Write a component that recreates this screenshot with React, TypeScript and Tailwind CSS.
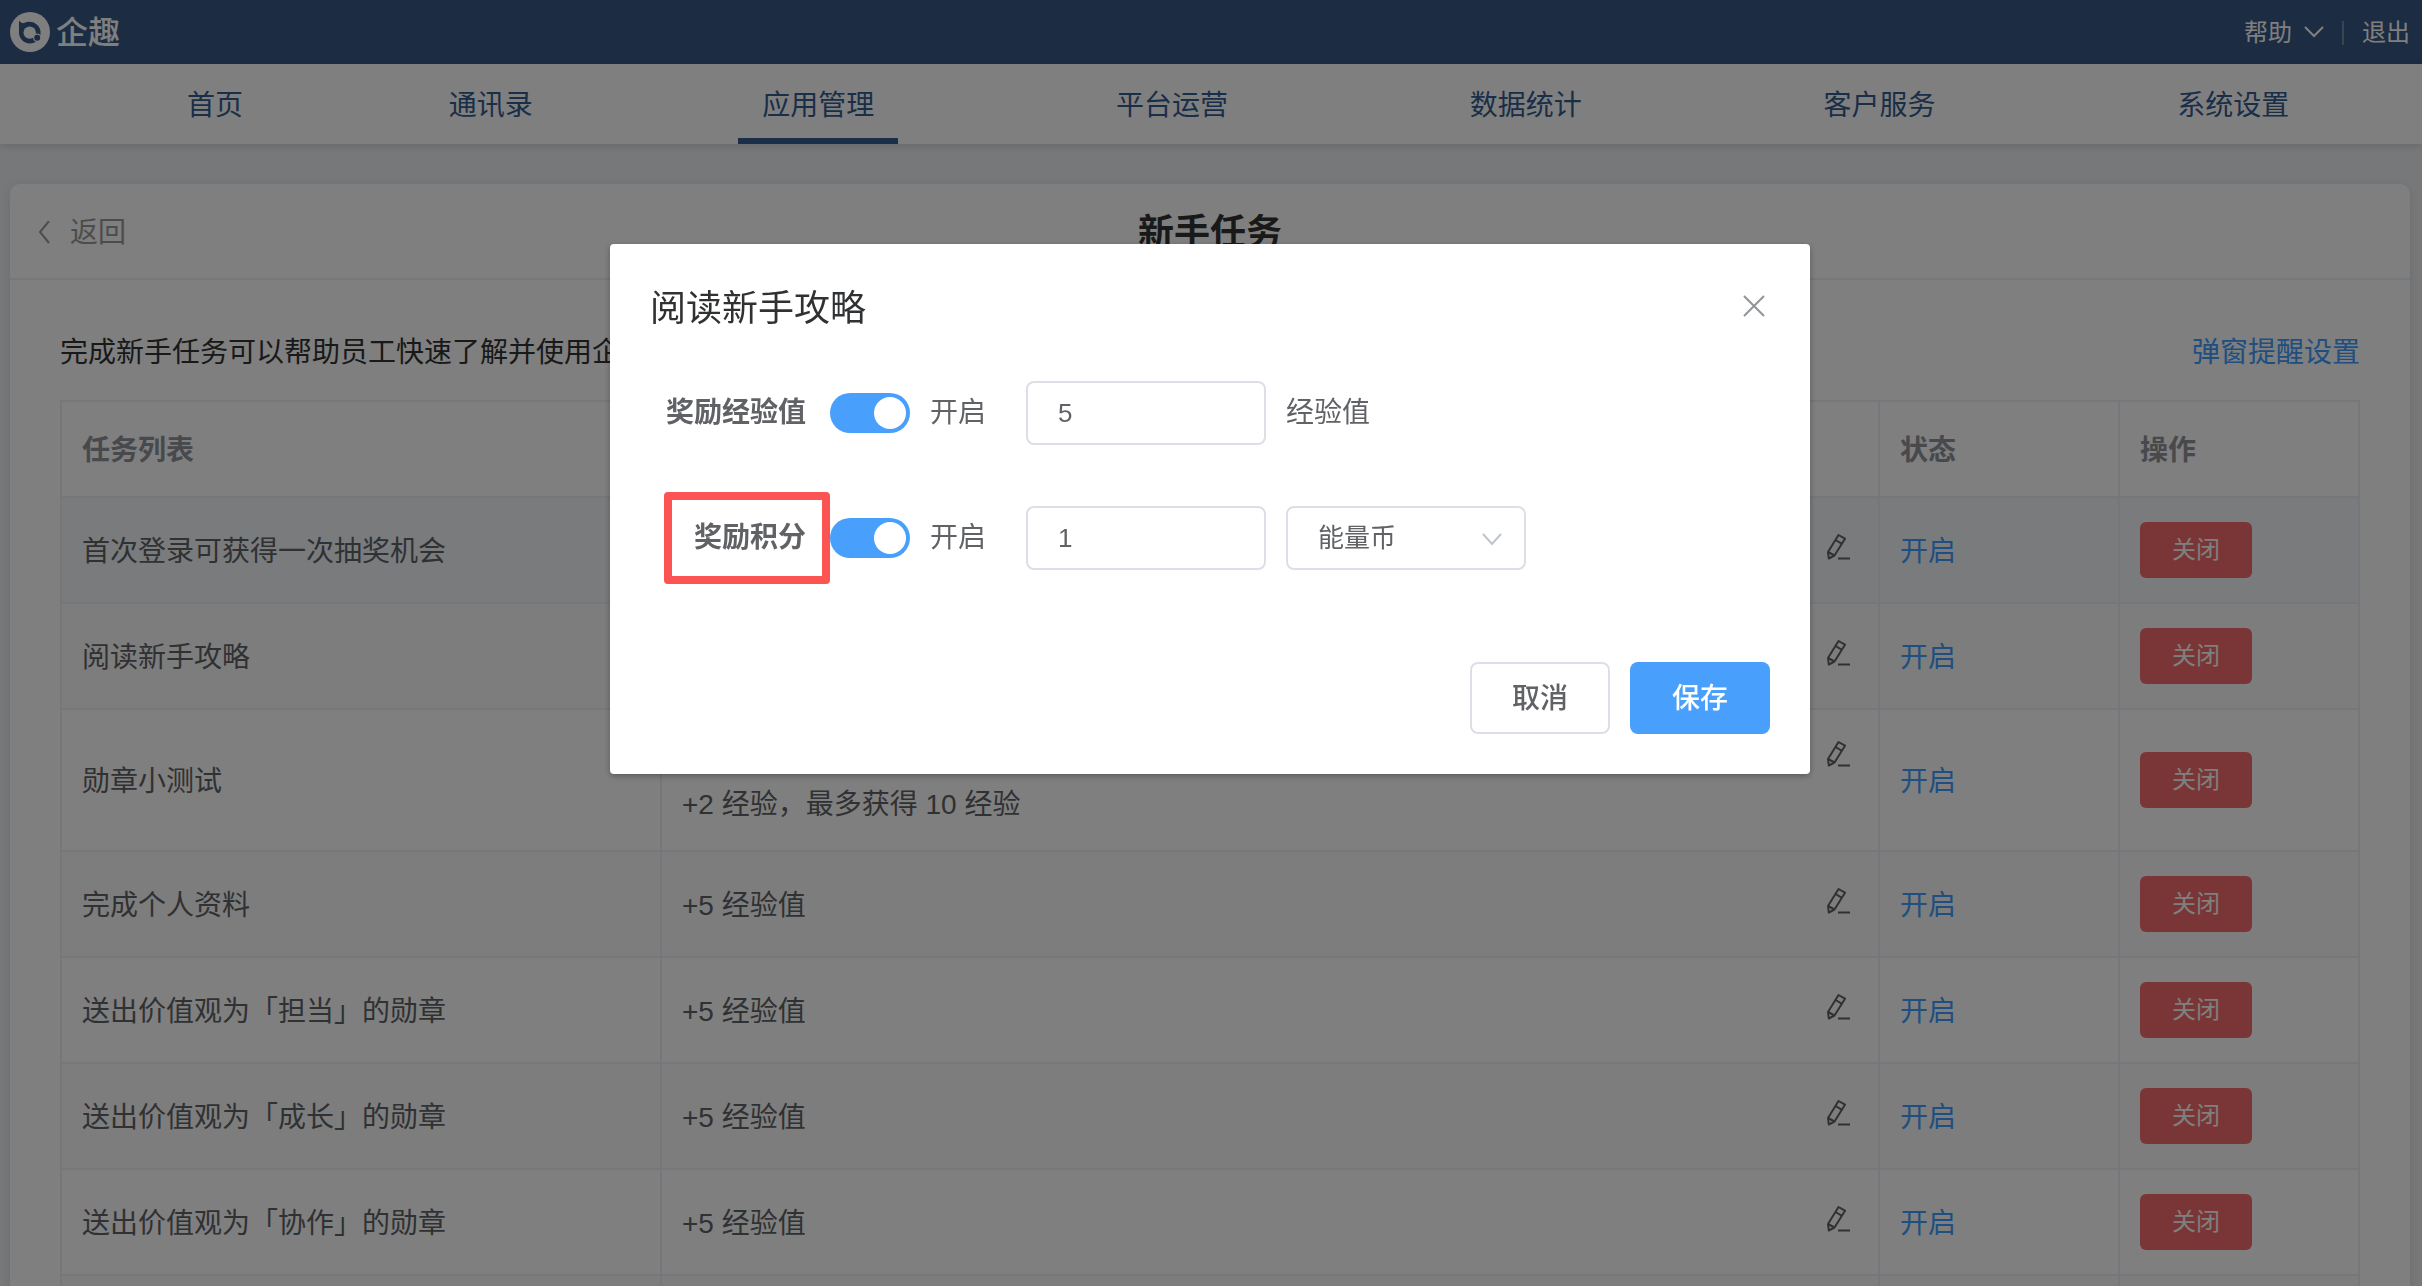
"use client";

import { useState } from 'react';

const navItems = ['首页', '通讯录', '应用管理', '平台运营', '数据统计', '客户服务', '系统设置'];

const tasks = [
  { name: '首次登录可获得一次抽奖机会', rewards: ['+1 次抽奖机会'] },
  { name: '阅读新手攻略', rewards: ['+5 经验值'] },
  { name: '勋章小测试', rewards: ['每答对一题', '+2 经验，最多获得 10 经验'] },
  { name: '完成个人资料', rewards: ['+5 经验值'] },
  { name: '送出价值观为「担当」的勋章', rewards: ['+5 经验值'] },
  { name: '送出价值观为「成长」的勋章', rewards: ['+5 经验值'] },
  { name: '送出价值观为「协作」的勋章', rewards: ['+5 经验值'] },
  { name: '送出价值观为「创新」的勋章', rewards: ['+5 经验值'] },
];

export default function App() {
  const [open, setOpen] = useState(true);

  return (
    <div className="h-screen overflow-hidden bg-[#eff1f4] font-['Liberation_Sans','Noto_Sans_CJK_SC',sans-serif] text-[28px] leading-[46px] text-[#606266]">
      <Header />
      <NavBar active="应用管理" />

      <main className="mt-10 mr-3 ml-[10px] rounded-[10px] bg-white shadow-[0_2px_12px_rgba(0,0,0,0.1)]">
        <div className="grid h-24 grid-cols-3 items-center border-b-2 border-[#ebeef5] px-6 pt-1">
          <a href="#" className="flex items-center gap-4 text-[#999999]">
            <svg className="h-6 w-5" viewBox="0 0 20 24" fill="none" stroke="currentColor" strokeWidth="2">
              <path d="M15 0L6 11l9 11" />
            </svg>
            返回
          </a>
          <h1 className="text-center text-[36px] font-bold text-[#333333]">新手任务</h1>
        </div>

        <div className="px-[50px] pt-[50px]">
          <div className="flex items-center justify-between pb-6">
            <p className="text-[#333333]">完成新手任务可以帮助员工快速了解并使用企趣</p>
            <a href="#" className="text-[#409eff]">弹窗提醒设置</a>
          </div>
          <TaskTable onEdit={() => setOpen(true)} />
        </div>
      </main>

      {open && <RewardDialog onClose={() => setOpen(false)} />}
    </div>
  );
}

function Header() {
  return (
    <header className="flex h-16 items-center justify-between bg-[#385884] pr-3 pl-[10px] text-white">
      <div className="flex items-center gap-[6px]">
        <Logo />
        <span className="pt-[2px] text-[32px] font-medium">企趣</span>
      </div>
      <div className="flex items-center gap-[18px] pt-[2px] text-[24px]">
        <button className="flex items-center gap-3">
          帮助
          <svg className="h-6 w-5" viewBox="0 0 20 24" fill="none" stroke="currentColor" strokeWidth="2">
            <path d="M1 6l9 9 9-9" />
          </svg>
        </button>
        <span className="h-6 w-[2px] bg-white/30" />
        <button>退出</button>
      </div>
    </header>
  );
}

function Logo() {
  return (
    <svg className="size-10" viewBox="0 0 40 40">
      <circle cx="20" cy="20" r="20" fill="#fff" />
      <path
        d="M9 8.500c1.500 2 3 2.800 5 2.600 1.800-.9 3.600-1.300 5.700-1.300A10.800 10.800 0 1 1 9 20.600z"
        fill="#385884"
      />
      <circle cx="19.700" cy="20.600" r="6.200" fill="#fff" />
      <circle cx="27.200" cy="25.800" r="4.200" fill="#fff" />
      <circle cx="27.200" cy="25.800" r="3" fill="#385884" />
    </svg>
  );
}

function NavBar({ active }: { active: string }) {
  return (
    <nav className="relative grid h-20 grid-cols-[250fr_302fr_354fr_354fr_354fr_354fr_354fr] bg-white pr-3 pl-[90px] shadow-[0_2px_8px_rgba(0,0,0,0.15)]">
      {navItems.map((item) => (
        <a
          key={item}
          href="#"
          className={`flex items-center justify-self-center border-b-6 px-6 pt-[10px] text-[#355c90] ${
            item === active ? 'border-[#355c90]' : 'border-transparent'
          }`}
        >
          {item}
        </a>
      ))}
    </nav>
  );
}

function TaskTable({ onEdit }: { onEdit: () => void }) {
  return (
    <table className="w-full table-fixed border-separate border-spacing-0 border-t-2 border-l-2 border-[#ebeef5] text-left">
      <colgroup>
        <col className="w-[600px]" />
        <col />
        <col className="w-[240px]" />
        <col className="w-[240px]" />
      </colgroup>
      <thead>
        <tr className="text-[#909399]">
          {['任务列表', '任务奖励', '状态', '操作'].map((title) => (
            <th key={title} className="border-r-2 border-b-2 border-[#ebeef5] px-5 pt-[26px] pb-[22px] font-bold">
              {title}
            </th>
          ))}
        </tr>
      </thead>
      <tbody>
        {tasks.map((task) => (
          <tr key={task.name} className="even:bg-[#fafafa] first:bg-[#f5f7fa]">
            <td className="border-r-2 border-b-2 border-[#ebeef5] px-5 pt-[26px] pb-[22px]">{task.name}</td>
            <td className="border-r-2 border-b-2 border-[#ebeef5] px-5 pt-[26px] pb-[22px]">
              <div className="flex items-start justify-between">
                <div>
                  {task.rewards.map((line) => (
                    <p key={line}>{line}</p>
                  ))}
                </div>
                <button aria-label="编辑" onClick={onEdit} className="flex h-9 items-center">
                  <EditIcon />
                </button>
              </div>
            </td>
            <td className="border-r-2 border-b-2 border-[#ebeef5] px-5 pt-[26px] pb-[22px] text-[#409eff]">开启</td>
            <td className="border-r-2 border-b-2 border-[#ebeef5] px-5 py-6">
              <button className="block h-14 w-28 rounded-[6px] bg-[#f56c6c] text-[24px] text-white">关闭</button>
            </td>
          </tr>
        ))}
      </tbody>
    </table>
  );
}

function EditIcon() {
  return (
    <svg className="size-8" viewBox="0 0 32 32" fill="none" stroke="currentColor" strokeWidth="2" strokeLinejoin="round">
      <path d="M12.500 4l6.500 3.700L8.500 24.500 2.800 27.500 2 21z" />
      <path d="M9.500 9l6.500 3.800M2 21l6.500 3.500M12 27.500h12" />
    </svg>
  );
}

function RewardDialog({ onClose }: { onClose: () => void }) {
  return (
    <div className="fixed inset-0 z-10 bg-black/50 pt-[244px] pr-[2px]">
      <div
        role="dialog"
        aria-label="阅读新手攻略"
        className="mx-auto w-[1200px] rounded-[4px] bg-white p-10 shadow-[0_2px_6px_rgba(0,0,0,0.3)]"
      >
        <div className="flex items-start justify-between">
          <h2 className="text-[36px] leading-[50px] text-[#303133]">阅读新手攻略</h2>
          <button aria-label="关闭" onClick={onClose} className="pt-[6px] text-[#909399]">
            <svg className="size-8" viewBox="0 0 32 32" fill="none" stroke="currentColor" strokeWidth="2">
              <path d="M6 6l20 20M26 6L6 26" />
            </svg>
          </button>
        </div>

        <div className="flex flex-col gap-[61px] pt-[47px]">
          <FormRow id="exp" label="奖励经验值" value="5">
            <span>经验值</span>
          </FormRow>
          <FormRow id="points" label="奖励积分" value="1" highlighted>
            <CoinSelect />
          </FormRow>
        </div>

        <div className="flex justify-end gap-5 pt-[92px]">
          <button
            onClick={onClose}
            className="h-[72px] w-[140px] rounded-[8px] border-2 border-[#dcdfe6] pt-[2px] font-medium"
          >
            取消
          </button>
          <button
            onClick={onClose}
            className="h-[72px] w-[140px] rounded-[8px] bg-[#48a0fc] pt-[2px] font-medium text-white"
          >
            保存
          </button>
        </div>
      </div>
    </div>
  );
}

function FormRow({ id, label, value, highlighted, children }: any) {
  return (
    <div className="flex h-16 items-center">
      <div className="relative w-[180px] pr-6 text-right">
        <label htmlFor={id} className="font-bold">
          {label}
        </label>
        {highlighted && (
          <span className="absolute -inset-y-[23px] right-0 left-[14px] rounded-[4px] border-8 border-[#fc5353]" />
        )}
      </div>
      <label className="flex w-[196px] items-center gap-5">
        <input
          type="checkbox"
          defaultChecked
          className="h-10 w-20 appearance-none rounded-full bg-[#dcdfe6] p-1 before:block before:size-8 before:rounded-full before:bg-white checked:bg-[#48a0fc] checked:before:ml-10"
        />
        开启
      </label>
      <input
        id={id}
        type="text"
        defaultValue={value}
        className="mr-5 h-16 w-[240px] rounded-[8px] border-2 border-[#dcdfe6] px-[30px] text-[26px]"
      />
      {children}
    </div>
  );
}

function CoinSelect() {
  return (
    <div className="relative">
      <select
        aria-label="积分类型"
        className="h-16 w-[240px] appearance-none rounded-[8px] border-2 border-[#dcdfe6] bg-white px-[30px] text-[26px]"
      >
        <option>能量币</option>
      </select>
      <svg
        className="pointer-events-none absolute top-5 right-6 h-6 w-5 text-[#c0c4cc]"
        viewBox="0 0 20 24"
        fill="none"
        stroke="currentColor"
        strokeWidth="2"
      >
        <path d="M1 8l9 10 9-10" />
      </svg>
    </div>
  );
}
